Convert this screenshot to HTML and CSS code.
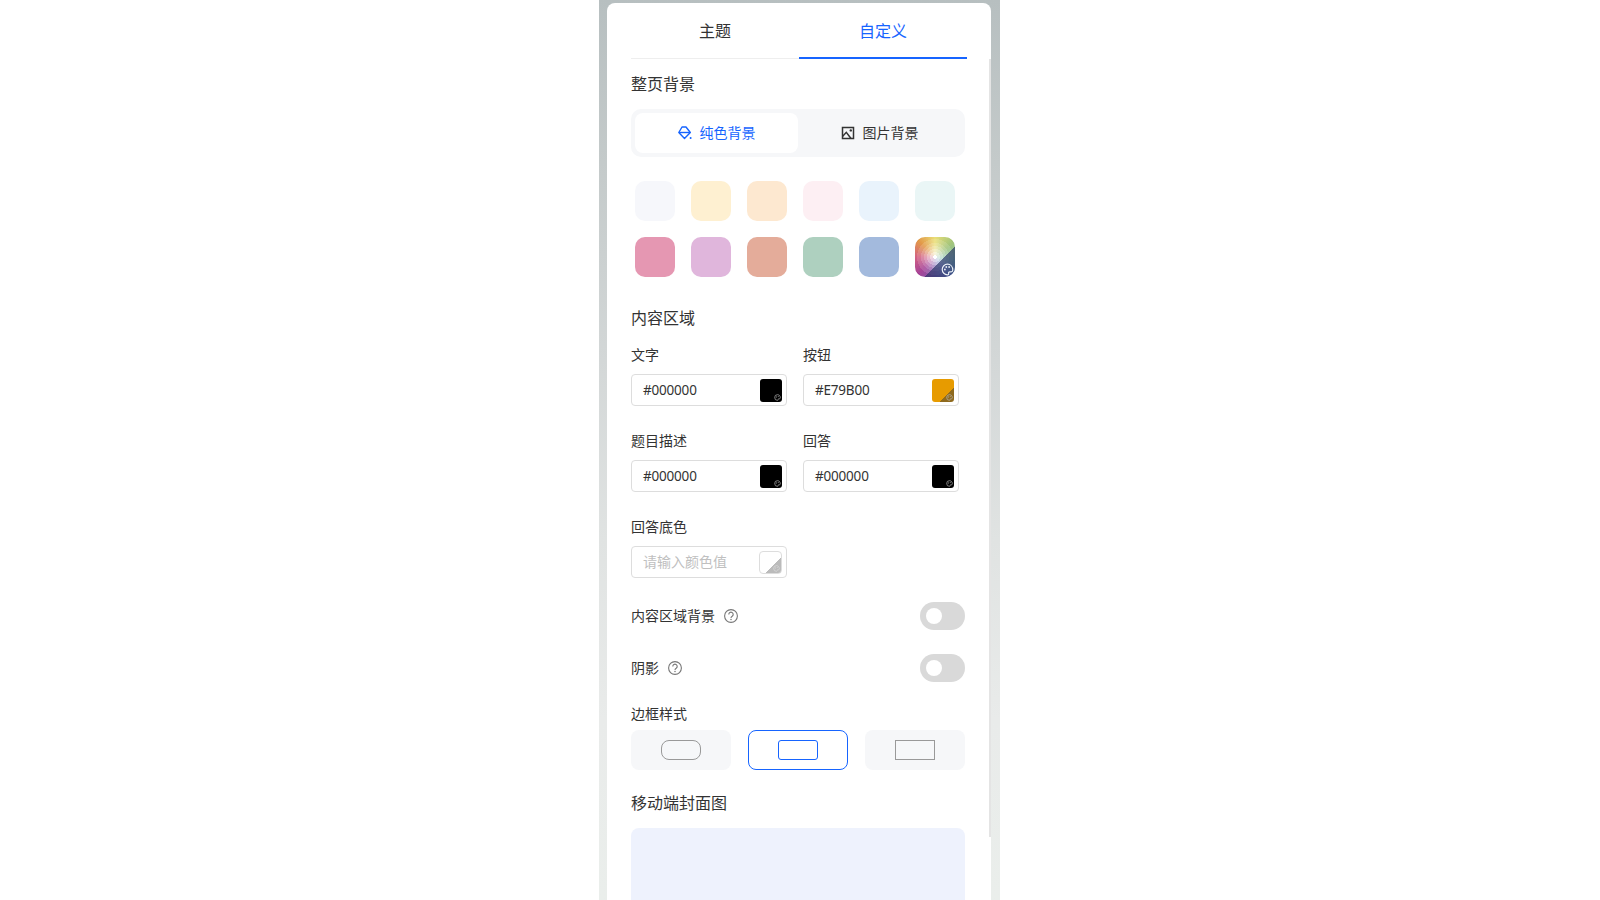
FILE: index.html
```html
<!DOCTYPE html>
<html lang="en">

<head>
  <meta charset="UTF-8">
  <meta name="viewport" content="width=device-width, initial-scale=1.0">
  <title>theme</title>
  <link rel="stylesheet" href="styles.css">
</head>

<body>
  <svg class="icon-defs" width="0" height="0">
    <symbol id="palette" viewBox="0 0 16 16">
      <path d="M8 1.500a6.500 6.500 0 1 0 0 13c1.300 0 1.700-.8 1.400-1.600-.4-1 .2-2 1.300-2h1.800c1.200 0 2-.9 2-2.200C14.500 4.300 11.600 1.500 8 1.500z" fill="none" stroke="currentColor" stroke-width="1.500" />
      <circle cx="4.800" cy="8" r="1.100" fill="currentColor" />
      <circle cx="6.500" cy="4.900" r="1.100" fill="currentColor" />
      <circle cx="10" cy="4.900" r="1.100" fill="currentColor" />
    </symbol>
    <symbol id="help" viewBox="0 0 14 14">
      <circle cx="7" cy="7" r="6.400" fill="none" stroke="currentColor" stroke-width="1.100" />
      <path d="M4.800 5.400a2.200 2.200 0 1 1 3.400 1.800c-.8.500-1.200.9-1.200 1.700" fill="none" stroke="currentColor" stroke-width="1.100" />
      <circle cx="7" cy="10.500" r=".75" fill="currentColor" />
    </symbol>
  </svg>

  <div class="stage">
    <div class="panel">
      <div class="scroll-thumb"></div>

      <div class="tabs">
        <div class="tab">主题</div>
        <div class="tab active">自定义</div>
      </div>

      <div class="content">
        <h3 class="section-title first">整页背景</h3>
        <div class="segment">
          <div class="segment-item active">
            <svg width="14" height="14" viewBox="0 0 14 14" fill="none" stroke="currentColor" stroke-width="1.400" stroke-linejoin="round">
              <path d="M4 1h4l4.300 5.500-5.800 6-5.700-6z" />
              <path d="M1 6.500h11" />
              <circle cx="12.600" cy="12" r="1" fill="currentColor" stroke="none" />
            </svg>
            <span>纯色背景</span>
          </div>
          <div class="segment-item">
            <svg width="14" height="14" viewBox="0 0 14 14" fill="none" stroke="currentColor" stroke-width="1.500">
              <rect x="1.500" y="1.500" width="11" height="11" />
              <path d="M1.500 10.500 L5.300 6.300 L10 12.500" />
              <circle cx="9.800" cy="4.400" r="1.200" fill="currentColor" stroke="none" />
            </svg>
            <span>图片背景</span>
          </div>
        </div>

        <div class="swatches">
          <div class="swatch c1"></div>
          <div class="swatch c2"></div>
          <div class="swatch c3"></div>
          <div class="swatch c4"></div>
          <div class="swatch c5"></div>
          <div class="swatch c6"></div>
          <div class="swatch c7"></div>
          <div class="swatch c8"></div>
          <div class="swatch c9"></div>
          <div class="swatch c10"></div>
          <div class="swatch c11"></div>
          <div class="swatch wheel">
            <svg class="wheel-icon" width="13" height="13"><use href="#palette" /></svg>
          </div>
        </div>

        <h3 class="section-title area">内容区域</h3>
        <div class="fields">
          <div class="field">
            <div class="field-label">文字</div>
            <div class="color-input">
              <span class="color-value">#000000</span>
              <div class="color-chip black"><svg width="7" height="7"><use href="#palette" /></svg></div>
            </div>
          </div>
          <div class="field">
            <div class="field-label">按钮</div>
            <div class="color-input">
              <span class="color-value">#E79B00</span>
              <div class="color-chip orange"><svg width="7" height="7"><use href="#palette" /></svg></div>
            </div>
          </div>
          <div class="field">
            <div class="field-label">题目描述</div>
            <div class="color-input">
              <span class="color-value">#000000</span>
              <div class="color-chip black"><svg width="7" height="7"><use href="#palette" /></svg></div>
            </div>
          </div>
          <div class="field">
            <div class="field-label">回答</div>
            <div class="color-input">
              <span class="color-value">#000000</span>
              <div class="color-chip black"><svg width="7" height="7"><use href="#palette" /></svg></div>
            </div>
          </div>
          <div class="field">
            <div class="field-label">回答底色</div>
            <div class="color-input">
              <span class="color-placeholder">请输入颜色值</span>
              <div class="color-chip empty"><svg width="7" height="7"><use href="#palette" /></svg></div>
            </div>
          </div>
        </div>

        <div class="switch-row">
          <div class="switch-label">
            <span>内容区域背景</span>
            <svg class="help" width="14" height="14"><use href="#help" /></svg>
          </div>
          <div class="switch"></div>
        </div>
        <div class="switch-row">
          <div class="switch-label">
            <span>阴影</span>
            <svg class="help" width="14" height="14"><use href="#help" /></svg>
          </div>
          <div class="switch"></div>
        </div>

        <div class="field-label border-label">边框样式</div>
        <div class="border-options">
          <div class="border-option"><div class="border-shape round"></div></div>
          <div class="border-option active"><div class="border-shape small"></div></div>
          <div class="border-option"><div class="border-shape square"></div></div>
        </div>

        <h3 class="section-title cover">移动端封面图</h3>
        <div class="cover-box"></div>
      </div>
    </div>
  </div>
</body>

</html>
```
FILE: styles.css
```css
/* 全局样式 */
html,
body {
  height: 100%;
}

body {
  margin: 0;
  background-color: #fff;
  color: #333;
  font-family: "Noto Sans", "Noto Sans CJK SC", sans-serif;
  overflow: hidden;
}

.icon-defs {
  display: block;
  height: 0;
}

/* 面板外的背景条 */
.stage {
  box-sizing: border-box;
  width: 401px;
  height: 900px;
  margin-left: 599px;
  padding: 3px 9px 0 8px;
  overflow: hidden;
  background: linear-gradient(180deg, #b7bfc0 0%, #c4caca 18%, #d3d7d7 40%, #e0e3e2 60%, #e9ebea 80%, #eaeeeb 100%);
}

.panel {
  position: relative;
  width: 384px;
  height: 1100px;
  box-sizing: border-box;
  padding: 0 24px;
  background-color: #fff;
  border-radius: 8px 8px 0 0;
}

.scroll-thumb {
  position: absolute;
  top: 56px;
  right: 0;
  width: 2px;
  height: 778px;
  background-color: #e4e4e4;
}

/* 标签页 */
.tabs {
  display: flex;
  box-shadow: inset 0 -1px 0 #eee;
}

.tab {
  flex: 1;
  box-sizing: border-box;
  height: 56px;
  padding-top: 16px;
  line-height: 24px;
  font-size: 16px;
  text-align: center;
}

.tab.active {
  color: #1664ff;
  border-bottom: 2px solid #1664ff;
}

.content {
  width: 334px;
}

.section-title {
  margin: 0;
  font-size: 16px;
  font-weight: 400;
  line-height: 24px;
}

.section-title.first {
  margin-top: 13px;
}

.section-title.area {
  margin-top: 29px;
}

.section-title.cover {
  margin-top: 21px;
}

/* 背景类型切换 */
.segment {
  display: flex;
  box-sizing: border-box;
  height: 48px;
  margin-top: 13px;
  padding: 4px;
  background-color: #f6f7f9;
  border-radius: 10px;
}

.segment-item {
  flex: 1;
  display: flex;
  justify-content: center;
  align-items: center;
  gap: 8px;
  font-size: 14px;
  border-radius: 8px;
}

.segment-item span {
  padding-bottom: 2px;
}

.segment-item.active {
  color: #1664ff;
  background-color: #fff;
}

/* 色块 */
.swatches {
  display: grid;
  grid-template-columns: repeat(6, 40px);
  gap: 16px;
  margin-top: 24px;
  padding: 0 4px;
}

.swatch {
  position: relative;
  height: 40px;
  border-radius: 10px;
  overflow: hidden;
}

.c1 { background-color: #f6f7fb; }
.c2 { background-color: #fef0d1; }
.c3 { background-color: #fde8d0; }
.c4 { background-color: #fdeff3; }
.c5 { background-color: #e9f3fc; }
.c6 { background-color: #eaf6f6; }
.c7 { background-color: #e597b2; }
.c8 { background-color: #e0b6dc; }
.c9 { background-color: #e4ac9a; }
.c10 { background-color: #aed0bf; }
.c11 { background-color: #a3badd; }

.wheel {
  background:
    radial-gradient(circle at 50% 50%, #fff 0 2px, rgba(255, 255, 255, .75) 2px 5px, rgba(255, 255, 255, .6) 5px 8px, rgba(255, 255, 255, .45) 8px 11px, rgba(255, 255, 255, .32) 11px 14px, rgba(255, 255, 255, .2) 14px 18px, rgba(255, 255, 255, .08) 18px 23px, rgba(255, 255, 255, 0) 23px),
    conic-gradient(#e8dc6c 0deg, #9cc070 50deg, #6fb5a0 100deg, #6a86c8 140deg, #6f4fa8 180deg, #a0358e 225deg, #cf5478 270deg, #e0913a 315deg, #e8dc6c 360deg);
}

.wheel::after {
  content: "";
  position: absolute;
  inset: 0;
  background: linear-gradient(135deg, transparent 62%, rgba(40, 50, 100, .65) 62%);
}

.wheel-icon {
  position: absolute;
  right: 1px;
  bottom: 1px;
  z-index: 1;
  color: #e8edf5;
}

/* 颜色输入 */
.fields {
  display: grid;
  grid-template-columns: 156px 156px;
  column-gap: 16px;
  row-gap: 24px;
  margin-top: 14px;
}

.field-label {
  font-size: 14px;
  line-height: 22px;
}

.color-input {
  display: flex;
  justify-content: space-between;
  align-items: center;
  box-sizing: border-box;
  height: 32px;
  margin-top: 8px;
  padding: 0 4px 0 11px;
  border: 1px solid #ddd;
  border-radius: 4px;
}

.color-value {
  font-size: 13.500px;
  letter-spacing: -.2px;
}

.color-placeholder {
  padding-bottom: 2px;
  font-size: 14px;
  color: #c0c0c0;
}

.color-chip {
  position: relative;
  box-sizing: border-box;
  width: 22px;
  height: 23px;
  border-radius: 3px;
  overflow: hidden;
}

.color-chip svg {
  position: absolute;
  right: 1px;
  bottom: 1px;
  z-index: 1;
  color: #bbb;
}

.color-chip.black {
  background-color: #000;
}

.color-chip.orange {
  background: linear-gradient(135deg, #e79b00 68%, #8f6a1e 68%);
}

.color-chip.empty {
  width: 23px;
  background: linear-gradient(135deg, #fff 64%, #bbb 64%);
  border: 1px solid #ddd;
  border-radius: 4px;
}

.color-chip.empty svg {
  color: #ddd;
}

/* 开关 */
.switch-row {
  display: flex;
  justify-content: space-between;
  align-items: center;
  height: 28px;
  margin-top: 24px;
}

.switch-label {
  display: flex;
  align-items: center;
  gap: 9px;
  font-size: 14px;
}

.switch-label span {
  padding-bottom: 2px;
}

.help {
  color: #777;
}

.switch {
  position: relative;
  width: 45px;
  height: 28px;
  background-color: #d9d9d9;
  border-radius: 14px;
}

.switch::after {
  content: "";
  position: absolute;
  top: 6px;
  left: 6px;
  width: 16px;
  height: 16px;
  background-color: #fff;
  border-radius: 50%;
}

/* 边框样式 */
.border-label {
  margin-top: 21px;
}

.border-options {
  display: flex;
  justify-content: space-between;
  margin-top: 5px;
}

.border-option {
  display: flex;
  justify-content: center;
  align-items: center;
  box-sizing: border-box;
  width: 100px;
  height: 40px;
  background-color: #f6f7f9;
  border-radius: 8px;
}

.border-option.active {
  background-color: #fff;
  border: 1px solid #1664ff;
}

.border-shape {
  box-sizing: border-box;
  width: 40px;
  height: 20px;
  border: 1px solid #999;
}

.border-shape.round {
  border-radius: 8px;
}

.border-shape.small {
  border-radius: 3px;
  border-color: #1664ff;
}

.cover-box {
  height: 300px;
  margin-top: 13px;
  background-color: #eef2fd;
  border-radius: 8px;
}
```
